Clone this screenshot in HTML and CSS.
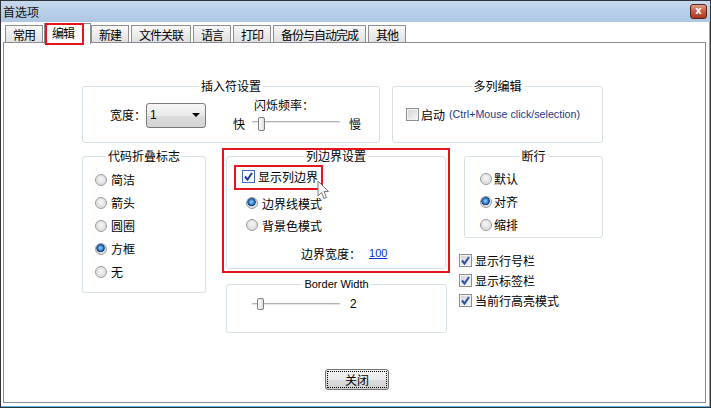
FILE: index.html
```html
<!DOCTYPE html>
<html lang="zh-CN">
<head>
    <meta charset="UTF-8">
    <meta name="viewport" content="width=device-width, initial-scale=1.0">
    <title>首选项</title>
    <link rel="stylesheet" href="styles.css">
</head>
<body>
    <div class="window">
        <div class="titlebar">
            <span class="title">首选项</span>
            <span class="close-btn">x</span>
        </div>

        <div class="tabs">
            <div class="tab">常用</div>
            <div class="tab tab-active">编辑<span class="mark mark-tab"></span></div>
            <div class="tab">新建</div>
            <div class="tab">文件关联</div>
            <div class="tab">语言</div>
            <div class="tab">打印</div>
            <div class="tab">备份与自动完成</div>
            <div class="tab">其他</div>
        </div>

        <div class="panel">
            <div class="row-top">
                <fieldset class="group group-caret">
                    <legend>插入符设置</legend>
                    <div class="caret-body">
                        <span class="caret-label">宽度：</span>
                        <div class="combo"><span>1</span><span class="combo-arrow"></span></div>
                        <div class="blink">
                            <div class="blink-label">闪烁频率：</div>
                            <div class="blink-row">
                                <span>快</span>
                                <div class="slider"><span class="thumb"></span></div>
                                <span class="slow">慢</span>
                            </div>
                        </div>
                    </div>
                </fieldset>

                <fieldset class="group group-multi">
                    <legend>多列编辑</legend>
                    <div class="multi-body">
                        <span class="checkbox"></span>
                        <span class="multi-label">启动</span>
                        <span class="hint">(Ctrl+Mouse click/selection)</span>
                    </div>
                </fieldset>
            </div>

            <div class="row-main">
                <fieldset class="group group-fold">
                    <legend>代码折叠标志</legend>
                    <div class="fold-body">
                        <div class="opt"><span class="radio"></span>简洁</div>
                        <div class="opt"><span class="radio"></span>箭头</div>
                        <div class="opt"><span class="radio"></span>圆圈</div>
                        <div class="opt"><span class="radio radio-on"></span>方框</div>
                        <div class="opt"><span class="radio"></span>无</div>
                    </div>
                </fieldset>

                <div class="col-mid">
                    <div class="annotated">
                        <fieldset class="group group-edge">
                            <legend>列边界设置</legend>
                            <div class="edge-body">
                                <div class="edge-check">
                                    <span class="check-item">
                                        <span class="checkbox checkbox-hot">
                                            <svg width="11" height="11" viewBox="0 0 11 11"><path d="M2 5.5 L4.5 8.5 L9 2" fill="none" stroke="#1d3f9e" stroke-width="2"/></svg>
                                        </span>
                                        <span>显示列边界</span>
                                        <span class="mark mark-check"></span>
                                        <svg class="cursor" width="13" height="21" viewBox="0 0 13 21"><path d="M1 1 L1 16 L4.5 12.5 L7 18.5 L9.5 17.5 L7 11.5 L11.5 11.5 Z" fill="#f6f6f6" stroke="#7a7a7a" stroke-width="1"/></svg>
                                    </span>
                                </div>
                                <div class="edge-opts">
                                    <div class="edge-opt"><span class="radio radio-on"></span>边界线模式</div>
                                    <div class="edge-opt"><span class="radio"></span>背景色模式</div>
                                </div>
                                <div class="edge-width">边界宽度：<a class="link">100</a></div>
                            </div>
                        </fieldset>
                        <span class="mark mark-group"></span>
                    </div>

                    <fieldset class="group group-bw">
                        <legend class="latin">Border Width</legend>
                        <div class="bw-body">
                            <div class="slider slider-bw"><span class="thumb"></span></div>
                            <span class="bw-value">2</span>
                        </div>
                    </fieldset>
                </div>

                <div class="col-right">
                    <fieldset class="group group-wrap">
                        <legend>断行</legend>
                        <div class="wrap-body">
                            <div class="opt"><span class="radio"></span>默认</div>
                            <div class="opt"><span class="radio radio-on"></span>对齐</div>
                            <div class="opt"><span class="radio"></span>缩排</div>
                        </div>
                    </fieldset>
                    <div class="check-list">
                        <div class="check-row"><span class="checkbox"><svg width="11" height="11" viewBox="0 0 11 11"><path d="M2 5.5 L4.5 8.5 L9 2" fill="none" stroke="#2c4fa6" stroke-width="2"/></svg></span>显示行号栏</div>
                        <div class="check-row"><span class="checkbox"><svg width="11" height="11" viewBox="0 0 11 11"><path d="M2 5.5 L4.5 8.5 L9 2" fill="none" stroke="#2c4fa6" stroke-width="2"/></svg></span>显示标签栏</div>
                        <div class="check-row"><span class="checkbox"><svg width="11" height="11" viewBox="0 0 11 11"><path d="M2 5.5 L4.5 8.5 L9 2" fill="none" stroke="#2c4fa6" stroke-width="2"/></svg></span>当前行高亮模式</div>
                    </div>
                </div>
            </div>

            <div class="row-buttons">
                <button class="btn-close" type="button">关闭</button>
            </div>
        </div>
    </div>
</body>
</html>
```

FILE: styles.css
```css
* {
    margin: 0;
    padding: 0;
    box-sizing: border-box;
}

body {
    font-family: "Noto Sans CJK SC", "Liberation Sans", sans-serif;
    font-size: 12px;
    color: #000;
    background: #fff;
}

.window {
    width: 711px;
    height: 408px;
    border: 1px solid #2f3438;
    box-shadow: inset -1px -1px 0 #52b6e6;
    display: flex;
    flex-direction: column;
    background: #fff;
}

/* title bar */
.titlebar {
    height: 21px;
    display: flex;
    align-items: center;
    justify-content: space-between;
    padding: 0 3px 0 2px;
    background: linear-gradient(#c6d9ee, #adc6e3);
}

.title {
    line-height: 14px;
    color: #111;
}

.close-btn {
    width: 17px;
    height: 15px;
    border: 1px solid #5c2117;
    border-radius: 3px;
    background: linear-gradient(#e0a08c, #c45b41 50%, #a9371f);
    color: #fff;
    font: bold 10px/12px "DejaVu Sans", sans-serif;
    text-align: center;
}

/* tabs */
.tabs {
    display: flex;
    align-items: flex-start;
    height: 17px;
    margin-top: 3px;
    padding-left: 4px;
}

.tab {
    height: 17px;
    padding: 2px 7px 0;
    border: 1px solid #8e8f8f;
    border-bottom: none;
    background: linear-gradient(#f8f8f8, #e0e0e0);
    line-height: 14px;
    letter-spacing: -1px;
    margin-right: 2px;
    white-space: nowrap;
}

.tab-active {
    position: relative;
    z-index: 1;
    height: 21px;
    margin: -2px 0 0 -1px;
    padding: 2px 16px 0 7px;
    background: #fff;
}

.mark {
    position: absolute;
    border: 2px solid #e8141c;
}

.mark-tab {
    top: -1px;
    left: 0;
    width: 39px;
    bottom: -1px;
}

/* panel */
.panel {
    flex: 1;
    margin: 0 4px 4px 2px;
    border: 1px solid #898c95;
    padding: 35px 0 0 78px;
    background: #fff;
}

.group {
    border: 1px solid #d5dfe5;
    border-radius: 3px;
    min-width: 0;
}

.group legend {
    margin: 0 auto;
    padding: 0 2px;
    line-height: 16px;
}

.group .latin {
    font-family: "Liberation Sans", sans-serif;
    font-size: 11px;
}

.row-top {
    display: flex;
    align-items: flex-start;
    gap: 12px;
    height: 65px;
}

.group-caret {
    width: 298px;
}

.caret-body {
    height: 48px;
    display: flex;
    align-items: center;
    padding: 0 0 6px 27px;
}

.caret-label {
    line-height: 16px;
}

.combo {
    width: 60px;
    height: 25px;
    border: 1px solid #7a7a7a;
    border-radius: 3px;
    background: linear-gradient(#f6f6f6, #e9e9e9 50%, #dcdcdc 51%, #d4d4d4);
    display: flex;
    align-items: center;
    justify-content: space-between;
    padding: 0 5px 0 3px;
    font-family: "Liberation Sans", sans-serif;
}

.combo-arrow {
    width: 0;
    height: 0;
    border-left: 4px solid transparent;
    border-right: 4px solid transparent;
    border-top: 4px solid #000;
}

.blink {
    margin-left: 27px;
    display: flex;
    flex-direction: column;
    gap: 4px;
}

.blink-label {
    padding-left: 21px;
    line-height: 14px;
}

.blink-row {
    display: flex;
    align-items: center;
    line-height: 16px;
}

.slider {
    width: 88px;
    height: 16px;
    margin-left: 7px;
    display: flex;
    align-items: center;
    background: linear-gradient(transparent 5px, #b4b4b4 5px, #b4b4b4 6px, #e4e4e4 6px, #e4e4e4 7px, transparent 7px);
}

.thumb {
    width: 7px;
    height: 14px;
    margin-left: 6px;
    border: 1px solid #7d7d7d;
    border-radius: 2px;
    background: linear-gradient(90deg, #fdfdfd, #dedede);
}

.slow {
    margin-left: 9px;
}

.group-multi {
    width: 211px;
}

.multi-body {
    height: 48px;
    display: flex;
    align-items: flex-start;
    padding: 14px 0 0 13px;
    line-height: 13px;
}

.multi-label {
    margin-left: 2px;
}

.hint {
    margin-left: 4px;
    font-family: "Liberation Sans", sans-serif;
    font-size: 10.7px;
    color: #22398a;
}

/* controls */
.checkbox {
    width: 13px;
    height: 13px;
    flex: none;
    border: 1px solid #8e8f8f;
    background: linear-gradient(135deg, #d0d3d8, #f7f7f7);
    box-shadow: inset 0 0 0 1px #f2f2f2;
    display: flex;
    align-items: center;
    justify-content: center;
}

.checkbox-hot {
    border-color: #3c6fb5;
    background: #fff;
    box-shadow: none;
}

.radio {
    width: 12px;
    height: 12px;
    flex: none;
    border: 1px solid #9c9c9c;
    border-radius: 50%;
    background: radial-gradient(circle at 50% 40%, #f6f6f6 0, #dedede 65%, #ececec 100%);
}

.radio-on {
    background: radial-gradient(circle at 45% 40%, #a8dcff 0, #2f83d6 30%, #0d3c7e 48%, #d8d8d8 55%, #f2f2f2 100%);
}

/* second row */
.row-main {
    display: flex;
    align-items: flex-start;
    margin-top: 5px;
}

.group-fold {
    width: 124px;
}

.fold-body {
    height: 128px;
    padding: 4px 0 0 12px;
}

.opt {
    height: 23px;
    display: flex;
    align-items: center;
    gap: 4px;
}

.col-mid {
    width: 221px;
    margin-left: 20px;
    display: flex;
    flex-direction: column;
}

.annotated {
    position: relative;
}

.mark-group {
    top: 0;
    left: -4px;
    right: -3px;
    bottom: -4px;
}

.group-edge {
    width: 220px;
}

.edge-body {
    height: 104px;
    padding: 3px 0 0 15px;
}

.edge-check {
    height: 19px;
    display: flex;
    align-items: center;
}

.check-item {
    position: relative;
    display: inline-flex;
    align-items: center;
    gap: 3px;
    height: 19px;
}

.mark-check {
    top: -2px;
    left: -8px;
    right: -5px;
    bottom: -4px;
}

.cursor {
    position: absolute;
    left: 75px;
    top: 13px;
}

.edge-opts {
    margin-top: 6px;
}

.edge-opt {
    height: 22px;
    display: flex;
    align-items: center;
    gap: 4px;
    padding-left: 4px;
}

.edge-width {
    height: 16px;
    margin-top: 9px;
    padding-left: 59px;
    display: flex;
    align-items: center;
}

.link {
    margin-left: 8px;
    font-family: "Liberation Sans", sans-serif;
    font-size: 11px;
    color: #0033cc;
    text-decoration: underline;
}

.group-bw {
    width: 221px;
    margin-top: 7px;
}

.bw-body {
    height: 40px;
    padding: 5px 0 0 25px;
    display: flex;
    align-items: flex-start;
}

.slider-bw {
    height: 14px;
    margin-left: 0;
    background: linear-gradient(transparent 6px, #b4b4b4 6px, #b4b4b4 7px, #e4e4e4 7px, #e4e4e4 8px, transparent 8px);
}

.slider-bw .thumb {
    height: 12px;
    margin-left: 5px;
}

.bw-value {
    margin-left: 10px;
    line-height: 14px;
    font-family: "Liberation Sans", sans-serif;
    font-size: 12px;
}

.col-right {
    width: 144px;
    margin-left: 12px;
}

.group-wrap {
    width: 139px;
    margin-left: 5px;
}

.wrap-body {
    height: 73px;
    padding: 3px 0 0 15px;
}

.wrap-body .opt {
    gap: 2px;
}

.check-list {
    margin-top: 12px;
}

.check-row {
    height: 20px;
    display: flex;
    align-items: center;
    gap: 3px;
}

/* buttons */
.row-buttons {
    margin-top: 36px;
    padding-left: 243px;
}

.btn-close {
    width: 64px;
    height: 21px;
    border: 1px solid #707070;
    border-radius: 3px;
    background: linear-gradient(#f2f2f2, #ebebeb 50%, #dddddd 51%, #cfcfcf);
    font-family: "Noto Sans CJK SC", sans-serif;
    font-size: 12px;
    line-height: 14px;
    outline: 1px dotted #000;
    outline-offset: -3px;
}
```
